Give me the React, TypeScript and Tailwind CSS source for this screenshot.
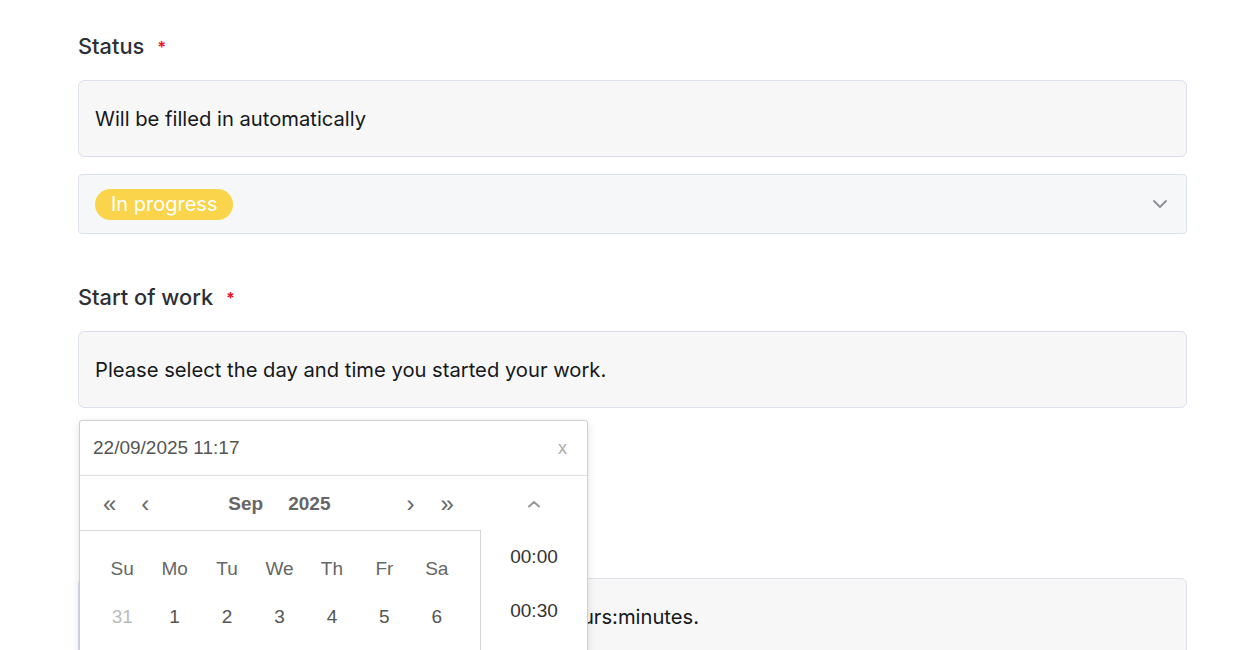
import React from "react";

const days = ["Su", "Mo", "Tu", "We", "Th", "Fr", "Sa"];
const row1 = ["31", "1", "2", "3", "4", "5", "6"];

function Label({ text }: { text: string }) {
  return (
    <div className="flex items-center h-[24px] text-[21.8px] font-medium text-[#2c3036] leading-none">
      <span>{text}</span>
      <span className="ml-[13px] text-[#f0141e] text-[16px] font-bold">*</span>
    </div>
  );
}

function InfoBox({ text }: { text: string }) {
  return (
    <div className="h-[77px] w-full rounded-[6px] border border-[#dde1ea] bg-[#f7f7f8] flex items-center px-[16px] pt-[1px] text-[20.2px] text-[#16181b]">
      {text}
    </div>
  );
}

export default function App() {
  return (
    <div className="w-[1260px] h-[650px] overflow-hidden bg-white" style={{ fontFamily: "Inter, 'Noto Sans', sans-serif" }}>
      <div className="ml-[78px] w-[1109px] pt-[35px] flex flex-col">
        <Label text="Status" />
        <div className="mt-[21px]">
          <InfoBox text="Will be filled in automatically" />
        </div>
        <div className="mt-[17px] h-[60px] rounded-[4px] border border-[#dde1ea] bg-[#f6f7f9] flex items-center justify-between pl-[16px] pr-[18px]">
          <span className="h-[31px] px-[16px] rounded-full bg-[#fad54c] text-white text-[20px] flex items-center">In progress</span>
          <svg width="16" height="10" viewBox="0 0 16 10" fill="none">
            <path d="M2 2l6 6 6-6" stroke="#8a8d93" strokeWidth="1.8" strokeLinecap="round" strokeLinejoin="round" />
          </svg>
        </div>
        <div className="mt-[52px]">
          <Label text="Start of work" />
        </div>
        <div className="mt-[21px]">
          <InfoBox text="Please select the day and time you started your work." />
        </div>
        <div className="relative mt-[13px]">
          <div className="h-[157px]" />
          <InfoBox text="Please enter the full duration of your workday in hours:minutes." />

          {/* datepicker popup */}
          <div
            className="absolute left-[1px] top-[-1px] w-[509px] h-[300px] bg-white border border-[#cfcfcf] rounded-[3px] shadow-[0_2px_8px_rgba(0,0,0,0.12)] flex flex-col text-[#555]"
            style={{ fontFamily: "'Liberation Sans', Arial, sans-serif" }}
          >
            <div className="h-[55px] border-b border-[#dcdcdc] flex items-center justify-between pl-[13px] pr-[20px]">
              <span className="text-[19px] text-[#555]">22/09/2025 11:17</span>
              <span className="text-[18px] text-[#aaa]">x</span>
            </div>
            <div className="flex flex-1">
              <div className="w-[401px] flex flex-col">
                <div className="h-[54px] flex items-center pt-[2px] text-[#666]">
                  <span className="ml-[23px] text-[24px] leading-none">«</span>
                  <span className="ml-[25px] text-[24px] leading-none">‹</span>
                  <span className="ml-[79px] text-[19px] font-bold">Sep</span>
                  <span className="ml-[25px] text-[19px] font-bold">2025</span>
                  <span className="ml-[76px] text-[24px] leading-none">›</span>
                  <span className="ml-[26px] text-[24px] leading-none">»</span>
                </div>
                <div className="flex-1 border-t border-r border-[#d6d6d6] pl-[16px] pt-[23px]">
                  <div className="grid grid-cols-7 w-[367px]">
                    {days.map((d) => (
                      <div key={d} className="h-[30px] flex items-center justify-center text-[19px] text-[#666]">
                        {d}
                      </div>
                    ))}
                  </div>
                  <div className="grid grid-cols-7 w-[367px] mt-[18px]">
                    {row1.map((d, i) => (
                      <div
                        key={d}
                        className={`h-[30px] flex items-center justify-center text-[19px] ${i === 0 ? "text-[#bbb]" : "text-[#555]"}`}
                      >
                        {d}
                      </div>
                    ))}
                  </div>
                </div>
              </div>
              <div className="flex-1 flex flex-col items-center">
                <div className="h-[54px] flex items-center pt-[2px]">
                  <svg width="14" height="8" viewBox="0 0 14 8" fill="none">
                    <path d="M2 6.5l5-4.5 5 4.5" stroke="#999" strokeWidth="2" strokeLinecap="round" strokeLinejoin="round" />
                  </svg>
                </div>
                <div className="mt-[12px] h-[30px] flex items-center text-[19px] text-[#333]">00:00</div>
                <div className="mt-[24px] h-[30px] flex items-center text-[19px] text-[#333]">00:30</div>
              </div>
            </div>
          </div>
        </div>
      </div>
    </div>
  );
}
